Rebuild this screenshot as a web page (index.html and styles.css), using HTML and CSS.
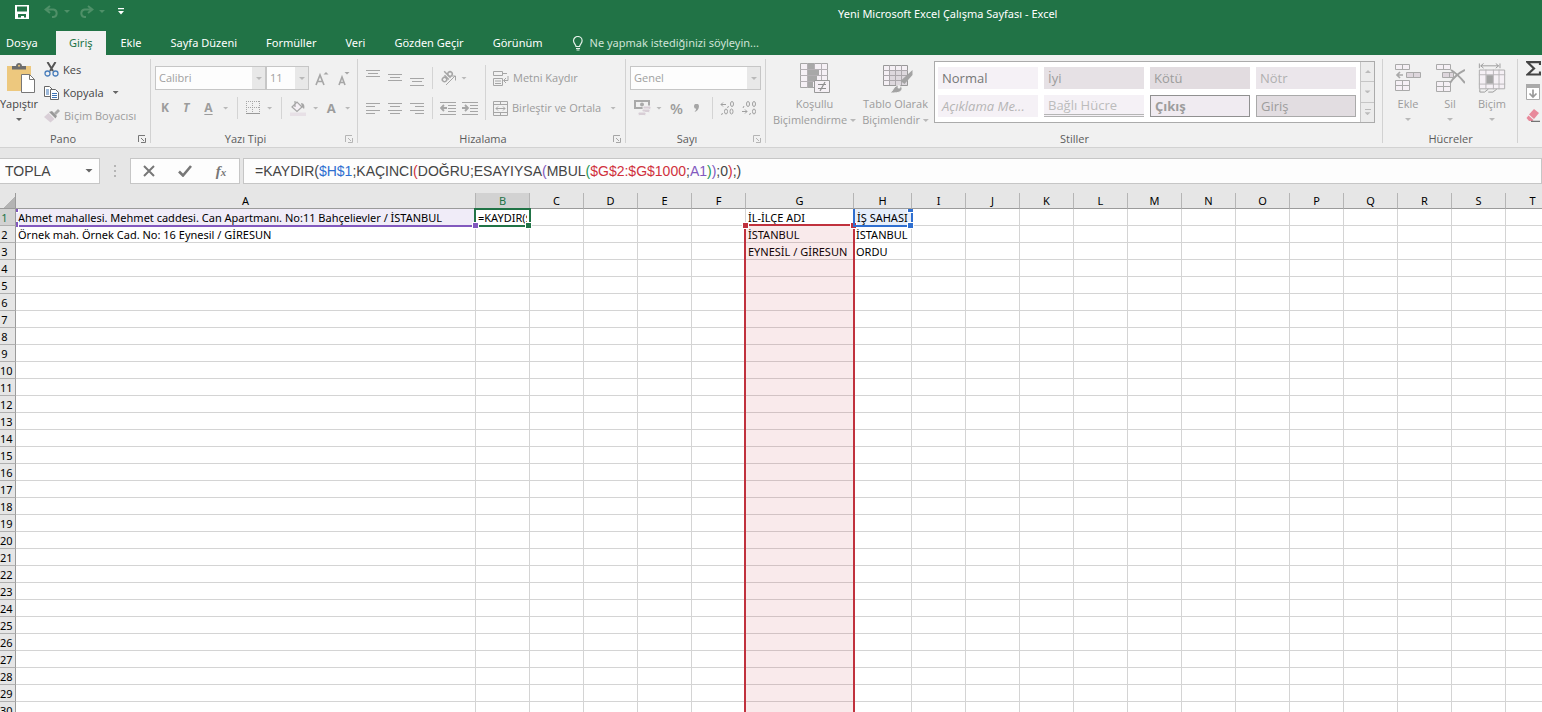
FILE: index.html
```html
<!DOCTYPE html>
<html lang="tr">
<head>
<meta charset="utf-8">
<title>Yeni Microsoft Excel Çalışma Sayfası - Excel</title>
<link rel="stylesheet" href="styles.css">
</head>
<body>
<header class="top">
  <div class="titlebar">
    <div class="quick">
      <button class="qbtn" aria-label="Kaydet"><svg width="14" height="14" viewBox="0 0 14 14"><path d="M0 0h14v14H0z" fill="#fff"/><path d="M2 1.500h10v5H2zM3 9h8v3.500H9V11H6v1.500H3z" fill="#217346"/></svg></button>
      <button class="qbtn undo" aria-label="Geri Al"><svg width="15" height="13" viewBox="0 0 15 13"><path d="M6 1L1.500 4.500 6 8M2 4.500h7.500a3.800 3.800 0 0 1 0 7.500H8" fill="none" stroke="#4f9068" stroke-width="2"/></svg><i class="caret faint"></i></button>
      <button class="qbtn redo" aria-label="Yinele"><svg width="15" height="13" viewBox="0 0 15 13"><path d="M9 1l4.500 3.500L9 8M13 4.500H5.500a3.800 3.800 0 0 0 0 7.500H7" fill="none" stroke="#4f9068" stroke-width="2"/></svg><i class="caret faint"></i></button>
      <button class="qbtn more" aria-label="Özelleştir"><svg width="6" height="7" viewBox="0 0 6 7"><path d="M0 0h6v1.300H0zM0 3h6L3 6.500z" fill="#fff"/></svg></button>
    </div>
    <h1 class="title">Yeni Microsoft Excel Çalışma Sayfası - Excel</h1>
  </div>
  <nav class="tabs">
    <button class="tab file">Dosya</button>
    <button class="tab active">Giriş</button>
    <button class="tab">Ekle</button>
    <button class="tab">Sayfa Düzeni</button>
    <button class="tab">Formüller</button>
    <button class="tab">Veri</button>
    <button class="tab">Gözden Geçir</button>
    <button class="tab">Görünüm</button>
    <button class="tab tell"><svg width="12" height="15" viewBox="0 0 12 15"><path d="M4 10.500C4 8.500 1.500 7.500 1.500 4.800a4.300 4.300 0 0 1 8.600 0c0 2.700-2.500 3.700-2.500 5.700z" fill="none" stroke="#e4f0e8" stroke-width="1.200"/><path d="M4 12.500h4M4.500 14h3" stroke="#e4f0e8"/></svg><span>Ne yapmak istediğinizi söyleyin...</span></button>
  </nav>
</header>

<section class="ribbon">
  <div class="group pano">
    <div class="body">
      <button class="big paste">
        <svg width="28" height="30" viewBox="0 0 28 30"><path d="M0 3h24v25H0z" fill="#edc87e"/><path d="M5 6.500V3h4c0-4 6-4 6 0h4v3.500z" fill="#6d6d6d"/><circle cx="12" cy="2.800" r="1" fill="#edc87e"/><path d="M14.500 11.500h8l5 5v13h-13z" fill="#fff" stroke="#777"/><path d="M22.500 11.500v5h5" fill="none" stroke="#777"/></svg>
        <span>Yapıştır</span><i class="caret dark"></i>
      </button>
      <div class="stack">
        <button class="line"><svg width="15" height="15" viewBox="0 0 15 15"><path d="M3.500 0l5.500 9M11.500 0L6 9" stroke="#555" stroke-width="2" fill="none"/><circle cx="3.500" cy="11.500" r="2.500" fill="none" stroke="#4a7ebb" stroke-width="1.300"/><circle cx="11.500" cy="11.500" r="2.500" fill="none" stroke="#4a7ebb" stroke-width="1.300"/></svg><span>Kes</span></button>
        <button class="line"><svg width="15" height="14" viewBox="0 0 15 14"><path d="M.5.5h5l3 3v7h-8z" fill="#fff" stroke="#666"/><path d="M2 4h3M2 6h3M2 8h3" stroke="#3f74b5"/><path d="M6.500 3.500h5l3 3v7h-8z" fill="#fff" stroke="#666"/><path d="M8 7.500h5M8 9.500h5M8 11.500h5" stroke="#3f74b5"/></svg><span>Kopyala</span><i class="caret dark"></i></button>
        <button class="line off"><svg width="16" height="14" viewBox="0 0 16 14"><path d="M10 4l4-4 2 2-4 4z" fill="#aaa"/><path d="M5 3l3-1 5 5-1.500 2.500z" fill="#999"/><path d="M4.500 4l6 6-4 3.500L0 8z" fill="#d9cfd7"/></svg><span>Biçim Boyacısı</span></button>
      </div>
    </div>
    <footer>Pano<svg class="launch on" width="8" height="8" viewBox="0 0 8 8"><path d="M.5 7V.5H7M3 3l3 3M7.500 3v4.500H3" /></svg></footer>
  </div>

  <div class="group font">
    <div class="body rows">
      <div class="row">
        <label class="combo face"><select aria-label="Yazı tipi"><option>Calibri</option></select><i class="caret"></i></label>
        <label class="combo size"><select aria-label="Boyut"><option>11</option></select><i class="caret"></i></label>
        <button class="ic grow" aria-label="Büyüt"><svg width="14" height="15" viewBox="0 0 14 15"><path d="M1 14L5 4l4 10M2.500 10.500h5" fill="none" stroke="#a6a6a6" stroke-width="1.600"/><path d="M8.500 3.500L11 1l2.500 2.500z" fill="#a6a6a6"/></svg></button>
        <button class="ic shrink" aria-label="Küçült"><svg width="12" height="15" viewBox="0 0 12 15"><path d="M1 14l3-8 3 8M2 11.500h4" fill="none" stroke="#a6a6a6" stroke-width="1.600"/><path d="M6.500 1L9 3.500 11.500 1z" fill="#a6a6a6"/></svg></button>
      </div>
      <div class="row marks">
        <button class="mark bold">K</button>
        <button class="mark ital">T</button>
        <button class="mark under">A</button><i class="caret"></i>
        <span class="vr"></span>
        <button class="ic" aria-label="Kenarlıklar"><svg width="14" height="14" viewBox="0 0 14 14"><path d="M.5 0v12M13.500 0v12M6.500 0v12M0 .5h14M0 6.500h14" fill="none" stroke="#a6a6a6" stroke-dasharray="1 1"/><path d="M0 12.500h14" stroke="#999"/></svg></button><i class="caret"></i>
        <span class="vr"></span>
        <button class="ic" aria-label="Dolgu Rengi"><svg width="16" height="16" viewBox="0 0 16 16"><path d="M5 1v6M2 7l5-5 5 5-5 4.500z" fill="#f5f0f5" stroke="#a6a6a6" stroke-width="1.200"/><path d="M11 3c3 0 4 3 3 6l-2-2z" fill="#a6a6a6"/><path d="M0 12.500h16V16H0z" fill="#e7e0e6"/></svg></button><i class="caret"></i>
        <button class="mark plain">A</button><i class="caret"></i>
      </div>
    </div>
    <footer>Yazı Tipi<svg class="launch" width="8" height="8" viewBox="0 0 8 8"><path d="M.5 7V.5H7M3 3l3 3M7.500 3v4.500H3" /></svg></footer>
  </div>

  <div class="group align">
    <div class="body">
      <div class="rows">
        <div class="row tight">
          <button class="ic" aria-label="Üste"><svg width="14" height="16" viewBox="0 0 14 16"><path d="M0 .5h14M2 3.500h10M0 6.500h14"/></svg></button>
          <button class="ic" aria-label="Ortaya"><svg width="14" height="16" viewBox="0 0 14 16"><path d="M0 4.500h14M2 7.500h10M0 10.500h14"/></svg></button>
          <button class="ic" aria-label="Alta"><svg width="14" height="16" viewBox="0 0 14 16"><path d="M0 8.500h14M2 11.500h10M0 15.500h14"/></svg></button>
          <span class="vr"></span>
          <button class="ic" aria-label="Yönlendirme"><svg width="17" height="16" viewBox="0 0 17 16"><g transform="rotate(-45 7 7)" stroke-width="1.500"><circle cx="3.500" cy="7" r="2.200"/><path d="M6.500 4v6M9 1v9"/><circle cx="11.300" cy="7" r="2.200"/></g><path d="M6 15l9-9M11 6h4.500v4.500" /></svg></button><i class="caret"></i>
        </div>
        <div class="row tight">
          <button class="ic" aria-label="Sola"><svg width="14" height="11" viewBox="0 0 14 11"><path d="M0 .5h14M0 3.500h9M0 7.500h14M0 10.500h9"/></svg></button>
          <button class="ic" aria-label="Ortala"><svg width="14" height="11" viewBox="0 0 14 11"><path d="M0 .5h14M2 3.500h10M0 7.500h14M2 10.500h10"/></svg></button>
          <button class="ic" aria-label="Sağa"><svg width="14" height="11" viewBox="0 0 14 11"><path d="M0 .5h14M5 3.500h9M0 7.500h14M5 10.500h9"/></svg></button>
          <span class="vr"></span>
          <button class="ic indent" aria-label="Girintiyi Azalt"><svg width="16" height="13" viewBox="0 0 16 13"><path d="M0 .5h16M8 3.500h8M8 6.500h8M8 9.500h8M0 12.500h16"/><path d="M7 6H2M4 3L1 6l3 3" stroke-width="1.800"/></svg></button>
          <button class="ic" aria-label="Girintiyi Artır"><svg width="16" height="13" viewBox="0 0 16 13"><path d="M0 .5h16M8 3.500h8M8 6.500h8M8 9.500h8M0 12.500h16"/><path d="M0 6h5M3 3l3 3-3 3" stroke-width="1.800"/></svg></button>
        </div>
      </div>
      <span class="vr tall"></span>
      <div class="rows">
        <button class="line off"><svg width="16" height="15" viewBox="0 0 16 15"><path d="M.5.500h9v4h-9zM.5 7.500h9v7h-9zM2 10h6M2 12.500h6M9 2.500h5M15 5v4.500h-4M13 7l-2.500 2.500L13 12"/></svg><span>Metni Kaydır</span></button>
        <button class="line off"><svg width="15" height="15" viewBox="0 0 15 15"><path d="M.5.500h14v14H.5zM.5 3.500h14M.5 11.500h14M7.500 0v4M7.500 11v4M3 7.500h9M5 5.500l-2 2 2 2M10 5.500l2 2-2 2"/></svg><span>Birleştir ve Ortala</span><i class="caret"></i></button>
      </div>
    </div>
    <footer>Hizalama<svg class="launch" width="8" height="8" viewBox="0 0 8 8"><path d="M.5 7V.5H7M3 3l3 3M7.500 3v4.500H3" /></svg></footer>
  </div>

  <div class="group number">
    <div class="body rows">
      <div class="row"><label class="combo format"><select aria-label="Sayı biçimi"><option>Genel</option></select><i class="caret"></i></label></div>
      <div class="row figures">
        <button class="ic" aria-label="Para birimi"><svg width="17" height="16" viewBox="0 0 17 16"><path d="M0 0h16v9H0z" fill="#aaa"/><path d="M2 2h12v5H2z" fill="#f1f1f1"/><circle cx="8" cy="4.500" r="2" fill="#aaa"/><g fill="#d8ced6" stroke="#f1f1f1"><rect x="9" y="6" width="8" height="3.500" rx="1.500"/><rect x="8" y="9" width="8" height="3.500" rx="1.500"/><rect x="4" y="12" width="8" height="3.500" rx="1.500"/></g></svg></button><i class="caret"></i>
        <button class="mark pct">%</button>
        <button class="mark" aria-label="Virgül"><svg width="6" height="8" viewBox="0 0 6 8"><path d="M0 2.300a2.400 2.400 0 0 1 5 0C5 5 3 7.500.5 8c1-1.200 1.500-2 1.600-3.200A2.500 2.500 0 0 1 0 2.300z" fill="#a6a6a6"/></svg></button>
        <span class="vr"></span>
        <button class="ic dec" aria-label="Ondalık Artır"><svg width="14" height="14" viewBox="0 0 14 14"><path d="M6 3.500H1M3 1.500l-2 2 2 2M8.500 5l-1 2M2.500 12l-1 2"/><ellipse cx="12" cy="3" rx="1.500" ry="2.500"/><ellipse cx="6" cy="10.500" rx="1.500" ry="2.500"/><ellipse cx="11.500" cy="10.500" rx="1.500" ry="2.500"/></svg></button>
        <button class="ic dec" aria-label="Ondalık Azalt"><svg width="14" height="14" viewBox="0 0 14 14"><path d="M0 10.500h5M3 8.500l2 2-2 2M2 5L1 7M8.500 12l-1 2"/><ellipse cx="6" cy="3" rx="1.500" ry="2.500"/><ellipse cx="12" cy="3" rx="1.500" ry="2.500"/><ellipse cx="12" cy="10.500" rx="1.500" ry="2.500"/></svg></button>
      </div>
    </div>
    <footer>Sayı<svg class="launch" width="8" height="8" viewBox="0 0 8 8"><path d="M.5 7V.5H7M3 3l3 3M7.500 3v4.500H3" /></svg></footer>
  </div>

  <div class="group styles">
    <div class="body">
      <button class="big cond">
        <svg width="30" height="30" viewBox="0 0 30 30"><path d="M.5.500h27v24H.5z" fill="#f5f0f5" stroke="#a6a6a6"/><path d="M0 6.500h28M0 12.500h28M0 18.500h28M7.500 0v25M14.500 0v25M21.500 0v25" stroke="#b4b0b4"/><path d="M8 1h6v5H8zM8 7h11v5H8zM8 13h9v5H8zM8 19h5v5H8z" fill="#a8a8a8"/><path d="M14.500 17.500h15v12h-15z" fill="#f5f0f5" stroke="#999"/><path d="M18 21.500h8M18 25.500h8M25 19l-5 9" stroke="#8f8f8f" stroke-width="1.200"/></svg>
        <span>Koşullu</span><span>Biçimlendirme <i class="caret"></i></span>
      </button>
      <button class="big tbl">
        <svg width="30" height="30" viewBox="0 0 30 30"><path d="M.5 2.500h24v20H.5z" fill="#f5f0f5" stroke="#999"/><path d="M7 8h17v14H7z" fill="#ddd8dd"/><path d="M0 7.500h25M0 12.500h25M0 17.500h25M6.500 2v20M12.500 2v20M18.500 2v20" stroke="#aca8ac"/><path d="M29.500 7v5l-8 9-4-3z" fill="#a3a3a3"/><path d="M7 30c3-2 3-5 6-7 4-2 8 2 5 5-2 2-6 2-11 2z" fill="#a3a3a3" stroke="#f1f1f1"/><circle cx="16" cy="24" r="1.500" fill="#f1f1f1"/></svg>
        <span>Tablo Olarak</span><span>Biçimlendir <i class="caret"></i></span>
      </button>
      <div class="gallery">
        <div class="cells">
          <button class="st normal">Normal</button><button class="st good">İyi</button><button class="st bad">Kötü</button><button class="st neutral">Nötr</button>
          <button class="st note">Açıklama Me...</button><button class="st linked">Bağlı Hücre</button><button class="st output">Çıkış</button><button class="st entry">Giriş</button>
        </div>
        <div class="scroll">
          <button aria-label="Yukarı"><i class="caret up"></i></button><button aria-label="Aşağı"><i class="caret"></i></button><button class="all" aria-label="Tümü"><i class="caret"></i></button>
        </div>
      </div>
    </div>
    <footer>Stiller</footer>
  </div>

  <div class="group cellgrp">
    <div class="body">
      <button class="big"><svg width="28" height="30" viewBox="0 0 28 30"><g fill="#f5f0f5" stroke="#aaa"><path d="M1.500 1.500h14v5h-14zM8.500 1.500v5M1.500 17.500h14v10h-14zM1.500 22.500h14M8.500 17.500v10"/><path d="M12.500 9.500h14v5h-14zM19.500 9.500v5" fill="#ddd6dc"/><path d="M9 12H3M6 9l-3 3 3 3" fill="none" stroke-width="1.700"/></g></svg><span>Ekle</span><i class="caret"></i></button>
      <button class="big"><svg width="30" height="30" viewBox="0 0 30 30"><g fill="#f5f0f5" stroke="#aaa"><path d="M1.500 1.500h14v5h-14zM8.500 1.500v5M1.500 18.500h14v10h-14zM1.500 23.500h14M8.500 18.500v10"/><path d="M7.500 9.500h11v5h-11zM14.500 9.500v5" fill="#ddd6dc"/></g><path d="M16 7c5 3 9 7 14 13M30 7c-6 3-11 7-15 13" fill="none" stroke="#a3a3a3" stroke-width="2"/></svg><span>Sil</span><i class="caret"></i></button>
      <button class="big"><svg width="28" height="32" viewBox="0 0 28 32"><path d="M.5.500v5M22.500.500v5M2 3h19M5 .5L2 3l3 2.500M18 .5L21 3l-3 2.500" fill="none" stroke="#999"/><path d="M.5 7.500h27v20H.5z" fill="#f5f0f5" stroke="#aaa"/><path d="M7.500 7v21M15.500 7v21M21.500 7v21M0 12.500h28M0 22.500h28" stroke="#b8b4b8"/><path d="M8 13h7v9H8z" fill="#a3a3a3"/><path d="M1 28v3h5l4-3M10 31h5l4-3" fill="none" stroke="#999"/></svg><span>Biçim</span><i class="caret"></i></button>
    </div>
    <footer>Hücreler</footer>
  </div>

  <div class="group edit">
    <div class="body">
      <button class="ic" aria-label="Toplam"><svg width="15" height="15" viewBox="0 0 15 15"><path d="M14 4V1.200H1.500L8 7.500l-6.500 6H14V10.500" fill="none" stroke="#444" stroke-width="2.200"/></svg></button>
      <button class="ic" aria-label="Doldur"><svg width="14" height="16" viewBox="0 0 14 16"><path d="M.5.500h13v15H.5z" fill="#fff" stroke="#aaa"/><path d="M0 0h14v4H0z" fill="#aaa"/><path d="M7 5.500V13M3.500 9.500L7 13l3.500-3.500" fill="none" stroke="#999" stroke-width="1.700"/></svg></button>
      <button class="ic" aria-label="Temizle"><svg width="14" height="14" viewBox="0 0 14 14"><path d="M8 1l5 4-5 6-5-4.500z" fill="#e8899b"/><path d="M2.500 7.500l5 4.500-1 1H3L.5 10z" fill="#e8899b"/><path d="M5 13.300h9" stroke="#555"/></svg></button>
    </div>
  </div>
</section>

<section class="formulabar">
  <div class="name"><input aria-label="Ad Kutusu" value="TOPLA"><i class="caret wide dark"></i></div>
  <span class="dots"></span>
  <div class="fbtns">
    <button aria-label="İptal"><svg width="12" height="12" viewBox="0 0 12 12"><path d="M1 1l10 10M11 1L1 11" stroke="#777" stroke-width="2"/></svg></button>
    <button aria-label="Gir"><svg width="14" height="12" viewBox="0 0 14 12"><path d="M1 6.500l4 4L13 1" fill="none" stroke="#777" stroke-width="2.600"/></svg></button>
    <button class="fx" aria-label="İşlev Ekle">f<small>x</small></button>
  </div>
  <div class="formula" role="textbox" contenteditable="true" aria-label="Formül" spellcheck="false">=KAYDIR(<span class="b">$H$1</span>;KAÇINCI<span class="r">(</span>DOĞRU;ESAYIYSA<span class="p">(</span>MBUL<span class="g">(</span><span class="r">$G$2:$G$1000</span>;<span class="p">A1</span><span class="g">)</span><span class="p">)</span>;0<span class="r">)</span>;)</div>
</section>

<main class="sheet"><table class="grid" id="grid"></table></main>
<script src="app.js"></script>
</body>
</html>
```
FILE: styles.css
```css
* { box-sizing: border-box; }
body {
  margin: 0;
  height: 100vh;
  overflow: hidden;
  display: flex;
  flex-direction: column;
  background: #fff;
  font: 12px/16px "Open Sans", "Noto Sans", sans-serif;
  color: #444;
}
button {
  margin: 0;
  padding: 0;
  border: 0;
  background: none;
  font: inherit;
  color: inherit;
  display: flex;
  align-items: center;
  white-space: nowrap;
}
svg { display: block; flex: none; }

.caret {
  display: inline-block;
  flex: none;
  width: 6px;
  height: 3px;
  background: #b9b9b9;
  clip-path: polygon(0 0, 100% 0, 50% 100%);
}
.caret.dark { background: #666; }
.caret.faint { background: #4f9068; }
.caret.up { transform: rotate(180deg); }
.caret.wide { width: 8px; height: 4px; }

/* Title bar and tabs */
.top { background: #217346; color: #fff; font-family: "Noto Sans", sans-serif; }
.titlebar { display: flex; height: 31px; font-size: 11px; }
.quick { display: flex; width: 838px; padding: 0 0 8px 15px; align-items: center; }
.qbtn { gap: 5px; }
.undo { margin-left: 15px; }
.redo { margin-left: 9px; }
.more { margin-left: 13px; }
.title { flex: 1; margin: 0; padding-top: 6px; font: inherit; }
.tabs { display: flex; height: 24px; font-size: 11px; }
.tab { padding: 0 14px 0 15px; }
.tab.file { width: 56px; padding: 0 6px; }
.tab.active { padding: 0 13px; background: #f1f1f1; color: #217346; }
.tell { gap: 6px; color: #cfe3d7; }

/* Ribbon */
.ribbon {
  display: flex;
  flex: none;
  height: 93px;
  background: #f1f1f1;
  border-bottom: 1px solid #d2d2d2;
  font-size: 11px;
}
.group {
  position: relative;
  flex: none;
  display: flex;
  flex-direction: column;
  justify-content: space-between;
}
.group::after {
  content: "";
  position: absolute;
  right: 0;
  top: 4px;
  bottom: 4px;
  width: 1px;
  background: #d2d2d2;
}
.group footer {
  position: relative;
  height: 16px;
  padding-right: 18px;
  text-align: center;
  color: #5c5c5c;
}
.group.pano footer { padding-right: 25px; }
.launch { position: absolute; right: 5px; top: 4px; fill: none; stroke: #b5b5b5; }
.launch.on { stroke: #777; }
.body { display: flex; }
.rows { display: flex; flex-direction: column; gap: 6px; padding-top: 11px; }
.row { display: flex; align-items: center; height: 24px; }
.rows .line { height: 24px; }
.line { gap: 4px; }
.line .caret { margin-left: 5px; }
.off, .big, .mark { color: #9c9c9c; }
.vr { width: 1px; height: 22px; background: #d4d4d4; }
.big { flex-direction: column; line-height: 16px; }
.big > svg { height: 30px; margin-bottom: 3px; }
.big > .caret { margin-top: 6px; }

.pano { width: 151px; }
.pano .body { padding-top: 3px; }
.paste { width: 38px; padding-top: 5px; color: #444; }
.paste > svg { margin-left: 4px; }
.stack { margin-left: 6px; display: flex; flex-direction: column; }
.stack .line { height: 23px; }

.font { width: 207px; }
.font .body, .number .body { padding-left: 4px; }
.combo {
  position: relative;
  display: flex;
  height: 24px;
}
.combo select {
  appearance: none;
  width: 100%;
  padding: 0 3px;
  border: 1px solid #c6c6c6;
  border-radius: 0;
  background: linear-gradient(to left, #e8e8e8 13px, #fdfdfd 13px);
  font: inherit;
  color: #a0a0a0;
}
.combo .caret { position: absolute; right: 4px; top: 11px; }
.face { width: 111px; }
.size { width: 43px; }
.format { width: 131px; }
.grow { margin-left: 6px; }
.shrink { margin-left: 9px; }
.mark { font-size: 12px; font-weight: 700; }
.marks { padding-left: 6px; }
.marks .ital { margin-left: 14px; font-style: italic; }
.marks .under { margin: 0 10px 0 15px; text-decoration: underline; text-underline-offset: 2px; }
.marks .vr { margin: 0 8px; }
.marks .ic { margin-right: 7px; }
.marks .plain { margin: 0 9px 0 8px; font-size: 13px; }

.align { width: 268px; }
.align svg { fill: none; stroke: #a6a6a6; }
.align .body { padding-left: 8px; }
.tight { gap: 8px; }
.tight .vr { margin-right: -1px; }
.tight .caret { margin-left: -4px; }
.tight .indent { margin-right: -2px; }
.align .vr.tall { height: 55px; margin: 10px 7px 0; }
.rows:first-child { min-width: 106px; }

.number { width: 140px; }
.figures { padding-left: 4px; }
.figures .caret { margin: 0 8px 0 5px; }
.pct { width: 24px; font-size: 15px; font-weight: 600; }
.figures .vr { margin: 0 7px 0 12px; }
.dec { margin-right: 8px; }
.dec svg { fill: none; stroke: #a0a0a0; }

.styles { flex: 1; }
.styles .body { padding: 6px 8px 0 6px; align-items: flex-start; }
.group.styles footer, .group.cellgrp footer { padding-right: 0; }
.styles .big { padding-top: 2px; }
.cond { width: 85px; }
.tbl { width: 77px; }
.tbl > svg { margin-left: 4px; }
.big span .caret { vertical-align: 2px; }
.gallery { display: flex; flex: 1; border: 1px solid #ababab; background: #fff; }
.cells {
  flex: 1;
  display: grid;
  grid-template-columns: repeat(4, 1fr);
  gap: 6px;
  padding: 5px 4px 5px 3px;
}
.st { height: 22px; padding: 0 4px; font-size: 13px; color: #9c9c9c; background: #f5f1f6; }
.st.normal { color: #777; }
.st.good { background: #e6e1e5; }
.st.bad { background: #e2dce0; }
.st.neutral { background: #ebe6eb; color: #b0b0b0; }
.st.note { font-style: italic; color: #b5b5b5; }
.st.linked { color: #bcbcbc; border-bottom: 3px double #b5b5b5; }
.st.output { border: 1px solid #909090; background: #f0ebf1; font-weight: 700; }
.st.entry { border: 1px solid #aaa; background: #e2dde1; }
.scroll { width: 14px; display: flex; flex-direction: column; background: #ececec; border-left: 1px solid #c6c6c6; }
.scroll button { flex: 1; justify-content: center; border-bottom: 1px solid #c6c6c6; }
.scroll button:last-child { border-bottom: 0; }
.scroll .caret { background: #bbb; }
.scroll .all { flex-direction: column; gap: 2px; }
.all::before { content: ""; width: 6px; height: 1px; background: #bbb; }

.cellgrp { width: 135px; }
.cellgrp .body { padding: 8px 2px 0 4px; }
.cellgrp .big { width: 42px; }

.edit { width: 24px; }
.edit::after { display: none; }
.edit .body { flex-direction: column; gap: 8px; padding: 6px 0 0 8px; }

/* Formula bar */
.formulabar {
  display: flex;
  flex: none;
  align-items: center;
  height: 45px;
  background: #e6e6e6;
  font: 14px/20px "Liberation Sans", Arial, sans-serif;
  color: #444;
}
.name, .fbtns, .formula { height: 26px; border: 1px solid #c6c6c6; background: #fdfdfd; }
.name { width: 100px; display: flex; align-items: center; padding-right: 6px; border-left: 0; }
.name input { flex: 1; min-width: 0; padding: 0 5px; border: 0; background: none; font: inherit; color: inherit; outline: 0; }
.dots { width: 2px; height: 12px; margin: 0 14px; background: repeating-linear-gradient(#b5b5b5 0 2px, transparent 2px 5px); }
.fbtns { width: 110px; display: flex; margin-right: 3px; }
.fbtns button { flex: 1; justify-content: center; }
.fbtns .fx { font: italic 700 15px/20px "Liberation Serif", serif; color: #777; }
.fx small { font-size: 11px; padding-top: 3px; }
.formula { flex: 1; padding: 2px 11px; white-space: nowrap; overflow: hidden; }
.b { color: #2f6fd0; }
.r { color: #d0303c; }
.p { color: #8259be; }
.g { color: #219653; }

/* Sheet */
.sheet { flex: 1; min-height: 0; overflow: hidden; background: #fff; }
.grid {
  width: 1560px;
  table-layout: fixed;
  border-collapse: separate;
  border-spacing: 0;
  font: 11px/15px "Noto Sans", sans-serif;
  color: #000;
}
.grid th { padding: 0; background: #e6e6e6; font-weight: 400; white-space: nowrap; }
.grid thead th { height: 16px; border-bottom: 1px solid #9b9b9b; border-right: 1px solid #b5b5b5; }
.grid tbody th { height: 17px; padding-top: 1px; border-bottom: 1px solid #b0b0b0; border-right: 1px solid #9b9b9b; }
.grid tbody th span { display: block; padding-right: 6px; }
.grid th.on { background: #d2d2d2; color: #217346; }
.grid td { position: relative; height: 17px; padding: 1px 2px 0; border-right: 1px solid #d4d4d4; border-bottom: 1px solid #d4d4d4; white-space: nowrap; }
.grid thead .corner { border-right-color: #9b9b9b; background: linear-gradient(135deg, #e6e6e6 62%, #b4b4b4 62%); }
.w-head { width: 16px; }
.w-a { width: 460px; }
.w-std { width: 54px; }
.w-g { width: 108px; }
.w-h { width: 58px; }
.ref-a { background: #f0ecf8; }
.grid .ref-h { padding-left: 3px; background: #e6eefa; }
.mark-a, .mark-h, .mark-b, .mark-g { position: absolute; pointer-events: none; z-index: 1; }
.mark-a, .mark-h { z-index: 2; }
.mark-a { inset: 0 -1px -2px 0; border-bottom: 2px solid #8259be; }
.mark-h { inset: 0 -2px -2px -1px; border: solid #2f6fd0; border-width: 0 2px 2px; }
.mark-b { inset: -1px -2px -2px -2px; border: 2px solid #217346; }
.mark-g { top: -2px; left: -2px; right: -2px; height: 100vh; border: 2px solid #c0313d; border-bottom: 0; background: rgba(192, 49, 61, .1); }
.h { position: absolute; width: 7px; height: 7px; border: 1px solid #fff; }
.mark-a .h { background: #8259be; }
.mark-h .h { background: #2f6fd0; }
.mark-b .h { background: #217346; }
.mark-g .h { background: #c0313d; }
.tl { left: -3px; top: 0; height: 4px; border-top: 0; }
.tr { right: -3px; top: 0; height: 4px; border-top: 0; }
.bl { left: -4px; bottom: -3px; }
.br { right: -3px; bottom: -4px; }
.mark-a .tl, .mark-a .bl { left: 0; width: 3px; border-left: 0; }
.mark-g .tl { left: -4px; top: -4px; height: 7px; border-top: 1px solid #fff; }
.mark-g .tr { right: -4px; top: -4px; height: 7px; border-top: 1px solid #fff; }
.clip { display: block; overflow: hidden; }
```
FILE: app.js
```js
const columns = "ABCDEFGHIJKLMNOPQRST".split("");
const widths = { A: "w-a", G: "w-g", H: "w-h" };
const cells = {
  A1: "Ahmet mahallesi. Mehmet caddesi. Can Apartmanı. No:11 Bahçelievler / İSTANBUL",
  A2: "Örnek mah. Örnek Cad. No: 16 Eynesil / GİRESUN",
  B1: "=KAYDIR($",
  G1: "İL-İLÇE ADI", G2: "İSTANBUL", G3: "EYNESİL / GİRESUN",
  H1: "İŞ SAHASI", H2: "İSTANBUL", H3: "ORDU"
};
const handles = names => names.map(n => `<i class="h ${n}"></i>`).join("");
const marks = {
  A1: `<div class="mark-a">${handles(["tl", "bl", "br"])}</div>`,
  B1: `<div class="mark-b">${handles(["br"])}</div>`,
  H1: `<div class="mark-h">${handles(["tr", "br"])}</div>`,
  G2: `<div class="mark-g">${handles(["tl", "tr"])}</div>`
};
const tint = { A1: "ref-a", H1: "ref-h" };

let html = `<colgroup><col class="w-head">${columns.map(c => `<col class="${widths[c] || "w-std"}">`).join("")}</colgroup>`;
html += `<thead><tr><th class="corner"></th>${columns.map(c => `<th class="${c === "B" ? "on" : ""}">${c}</th>`).join("")}</tr></thead><tbody>`;
for (let r = 1; r <= 30; r++) {
  html += `<tr><th class="${r === 1 ? "on" : ""}"><span>${r}</span></th>`;
  for (const c of columns) {
    const id = c + r;
    html += `<td class="${tint[id] || ""}">${cells[id] ? `<span class="clip">${cells[id]}</span>` : ""}${marks[id] || ""}</td>`;
  }
  html += "</tr>";
}
document.getElementById("grid").innerHTML = html + "</tbody>";
```
